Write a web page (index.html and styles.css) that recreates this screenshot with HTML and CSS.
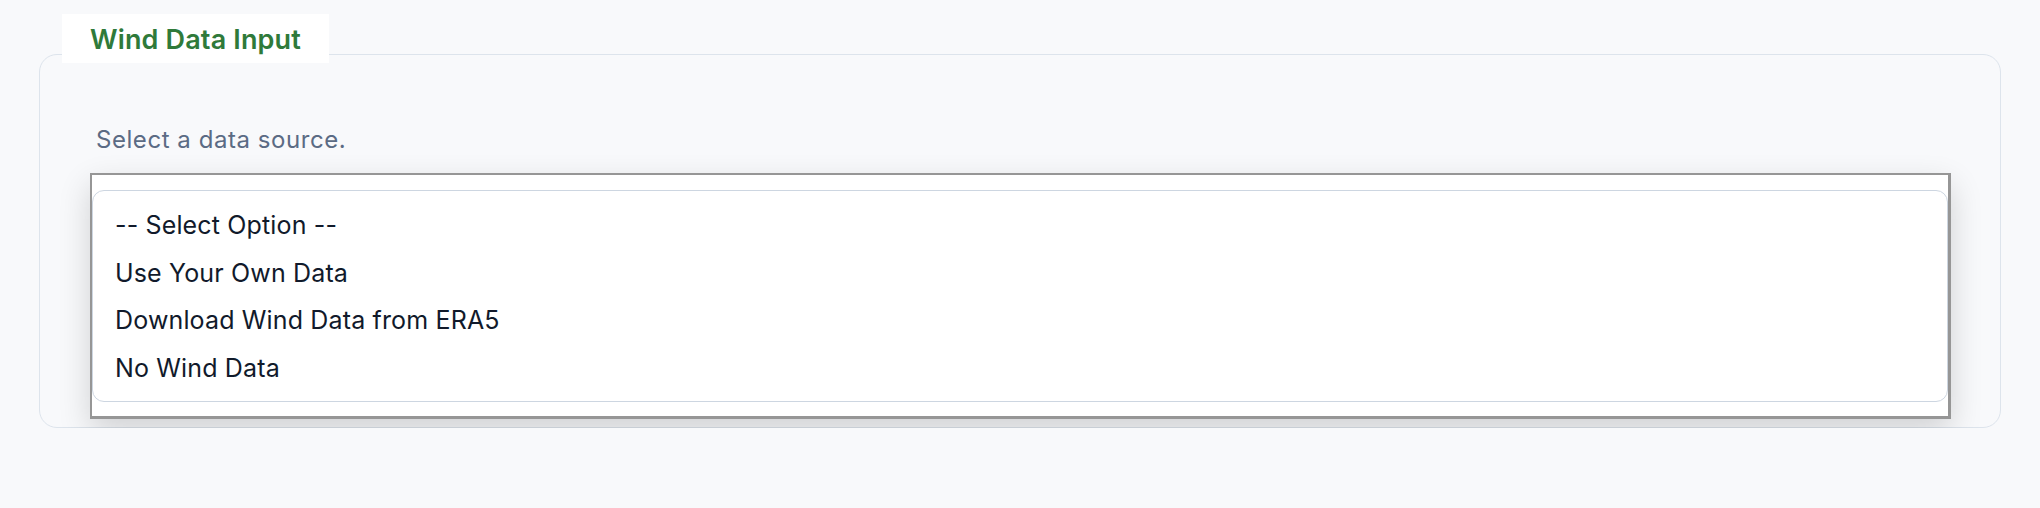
FILE: index.html
```html
<!DOCTYPE html>
<html lang="en">
  <head>
    <meta charset="UTF-8" />
    <meta name="viewport" content="width=device-width, initial-scale=1.0" />
    <title>Wind Data Input</title>
    <link rel="stylesheet" href="styles.css">
  </head>
  <body>
    <section class="panel">
      <div class="panel-tab">Wind Data Input</div>
      <div class="panel-body">
        <p class="field-label">Select a data source.</p>
        <div class="dropdown">
          <ul class="dropdown-list">
            <li>-- Select Option --</li>
            <li>Use Your Own Data</li>
            <li>Download Wind Data from ERA5</li>
            <li>No Wind Data</li>
          </ul>
        </div>
      </div>
    </section>
  </body>
</html>
```

FILE: styles.css
```css
:root {
  --page-bg: #f8f9fb;
  --panel-border: #dde4ec;
  --title-green: #2f7a3a;
  --label-slate: #5b6b84;
  --text-dark: #111a2b;
}

body {
  margin: 0;
  font-family: "Inter", "Liberation Sans", sans-serif;
  background-color: var(--page-bg);
  color: var(--text-dark);
}

.panel {
  padding: 14px 39px 0;
}

.panel-tab {
  position: relative;
  z-index: 1;
  display: inline-block;
  margin-left: 23px;
  margin-bottom: -9px;
  padding: 0 28px;
  height: 49px;
  line-height: 51px;
  background-color: white;
  color: var(--title-green);
  font-size: 27px;
  font-weight: 600;
  letter-spacing: 0.15px;
}

.panel-body {
  border: 1px solid var(--panel-border);
  border-radius: 18px;
  padding: 71px 49px 8px 50px;
}

.field-label {
  margin: 0 0 19px;
  padding-left: 6px;
  font-size: 24px;
  line-height: 28px;
  letter-spacing: 0.55px;
  color: var(--label-slate);
}

.dropdown {
  background-color: white;
  border: 2px solid #969696;
  border-right-width: 3px;
  border-bottom-width: 3px;
  padding: 15px 0 14px;
  box-shadow: 0 12px 30px rgba(0, 0, 0, 0.16);
}

.dropdown-list {
  list-style: none;
  margin: 0;
  padding: 11px 0 8px;
  border: 1.5px solid #cdd6e1;
  border-radius: 12px;
}

.dropdown-list li {
  padding-left: 22px;
  height: 47.7px;
  line-height: 47.7px;
  font-size: 25px;
  letter-spacing: 0.15px;
}
```
